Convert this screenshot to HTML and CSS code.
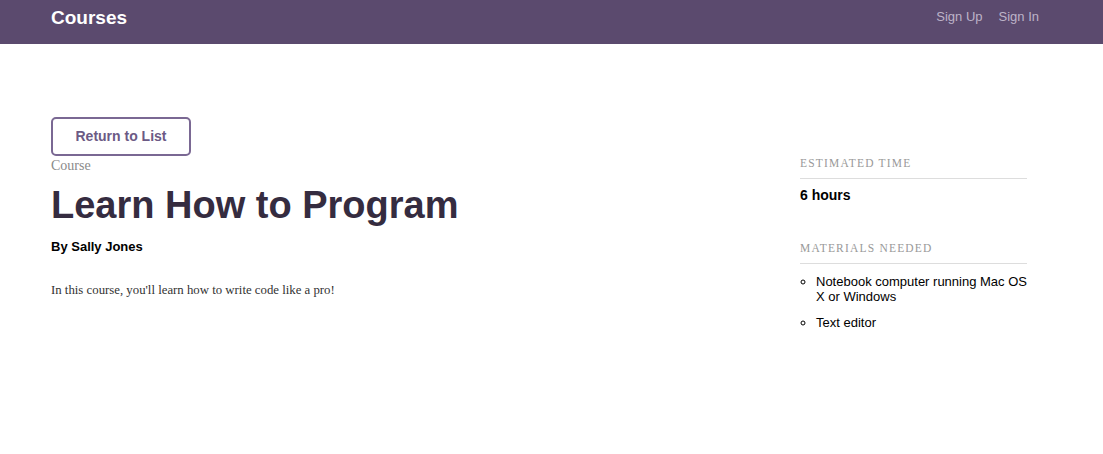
FILE: index.html
```html
<!DOCTYPE html>
<html>
<head>
<meta charset="utf-8">
<link rel="stylesheet" href="styles.css">
</head>
<body>
<header class="topbar">
  <div class="bar-inner">
    <a class="brand" href="#">Courses</a>
    <nav class="nav">
      <a href="#">Sign Up</a>
      <a href="#">Sign In</a>
    </nav>
  </div>
</header>
<main class="page">
  <section class="course">
    <a class="btn" href="#">Return to List</a>
    <div class="label">Course</div>
    <h1 class="title">Learn How to Program</h1>
    <p class="byline">By Sally Jones</p>
    <p class="desc">In this course, you'll learn how to write code like a pro!</p>
  </section>
  <aside class="side">
    <div class="block">
      <h3 class="side-head">Estimated Time</h3>
      <p class="hours">6 hours</p>
    </div>
    <div class="block">
      <h3 class="side-head">Materials Needed</h3>
      <ul class="materials">
        <li>Notebook computer running Mac OS X or Windows</li>
        <li>Text editor</li>
      </ul>
    </div>
  </aside>
</main>
</body>
</html>
```

FILE: styles.css
```css
* { box-sizing: border-box; }
body {
  margin: 0;
  font-family: "Liberation Sans", Arial, sans-serif;
  background: #fff;
  color: #000;
}
a { text-decoration: none; }

.topbar {
  background: #5b4a6e;
  height: 44px;
}
.bar-inner {
  width: 1001px;
  margin: 0 auto;
  display: flex;
  align-items: flex-start;
  justify-content: space-between;
  padding: 0 13px 0 0;
}
.brand {
  color: #fff;
  font-weight: bold;
  font-size: 19px;
  line-height: 22px;
  padding-top: 7px;
}
.nav {
  display: flex;
  gap: 16px;
  padding-top: 9px;
}
.nav a {
  color: #bdb3c8;
  font-size: 13px;
  line-height: 16px;
}

.page {
  width: 1001px;
  margin: 0 auto;
  display: flex;
  padding-top: 73px;
}
.course {
  flex: 1;
}
.btn {
  display: inline-block;
  width: 140px;
  height: 39px;
  border: 2px solid #7a6893;
  border-radius: 5px;
  color: #6c5a85;
  font-weight: bold;
  font-size: 14px;
  line-height: 35px;
  text-align: center;
}
.label {
  font-family: "Liberation Serif", "Times New Roman", serif;
  color: #8a8a8a;
  font-size: 14px;
  line-height: 16px;
  margin-top: 2px;
}
.title {
  margin: 8px 0 0;
  font-size: 38px;
  line-height: 46px;
  color: #352c40;
  font-weight: bold;
}
.byline {
  margin: 11px 0 0;
  font-size: 13px;
  font-weight: bold;
  line-height: 16px;
}
.desc {
  margin: 27px 0 0;
  font-family: "Liberation Serif", "Times New Roman", serif;
  font-size: 12.8px;
  line-height: 16px;
  color: #333;
}

.side {
  width: 227px;
  margin-right: 25px;
  padding-top: 39px;
}
.block {
  margin-bottom: 38px;
}
.side-head {
  margin: 0;
  font-family: "Liberation Serif", "Times New Roman", serif;
  font-weight: normal;
  text-transform: uppercase;
  font-size: 11.5px;
  letter-spacing: 1.2px;
  color: #999;
  line-height: 14px;
  padding-bottom: 8px;
  border-bottom: 1px solid #ddd;
}
.hours {
  margin: 8px 0 0;
  font-weight: bold;
  font-size: 14px;
  line-height: 16px;
}
.materials {
  margin: 10px 0 0;
  padding-left: 16px;
  list-style: circle;
  font-size: 13px;
  line-height: 15px;
}
.materials li {
  margin-bottom: 11px;
}
```
